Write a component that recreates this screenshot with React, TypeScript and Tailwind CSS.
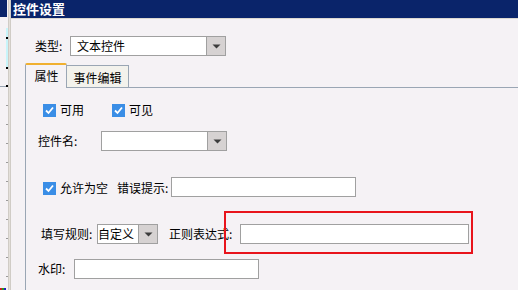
import React from "react";

const font = { fontFamily: '"Noto Sans CJK SC", "Noto Sans", sans-serif' };

function Check() {
  return (
    <span className="flex h-[13px] w-[13px] shrink-0 items-center justify-center bg-[#3a8ee6]">
      <svg width="11" height="11" viewBox="0 0 11 11">
        <path d="M2 5.5 L4.5 8 L9 2.5" stroke="white" strokeWidth="1.8" fill="none" />
      </svg>
    </span>
  );
}

function Arrow() {
  return (
    <svg width="9" height="5" viewBox="0 0 9 5">
      <path d="M0.5 0.5 H8.5 L4.5 4.5 Z" fill="#3c3c3c" />
    </svg>
  );
}

function Select({ w, text, tight }: { w: string; text?: string; tight?: boolean }) {
  return (
    <div className={`flex h-[20px] ${w} border border-[#a0a0a0] bg-white`}>
      <div
        className={`min-w-0 flex-1 overflow-hidden whitespace-nowrap ${tight ? "pl-0" : "pl-[6px]"} text-[12px] leading-[18px] text-black`}
      >
        {text}
      </div>
      <div className="flex w-[19px] shrink-0 items-center justify-center border-l border-[#a0a0a0] bg-[#d6d2d2]">
        <Arrow />
      </div>
    </div>
  );
}

function Input({ w }: { w: string }) {
  return <div className={`h-[20px] ${w} border border-[#a0a0a0] bg-white`} />;
}

export default function App() {
  const ticks = [105, 124, 143, 162, 181, 200, 219, 238, 257, 276];
  return (
    <div className="relative flex h-[290px] w-[518px] overflow-hidden bg-[#f5f2f5] text-[12px] text-black" style={font}>
      {/* left ruler strip */}
      <div className="relative h-full w-[8px] shrink-0">
        <div className="absolute left-0 top-0 h-[17px] w-[7px] bg-[#0a246a]" />
        <div className="absolute left-[6px] top-[28px] h-[40px] w-[2px] bg-[#c8f4fa]" />
        <div className="absolute left-[6px] top-[37px] h-[2px] w-[2px] bg-black" />
        <div className="absolute left-[6px] top-[67px] h-[2px] w-[2px] bg-black" />
        <div className="absolute left-0 top-[86px] h-px w-[6px] bg-[#9aa6b4]" />
        <div className="absolute left-[6px] top-[85px] h-[2px] w-[2px] bg-black" />
        {ticks.map((t) => (
          <div key={t} className="absolute left-[6px] h-px w-[2px] bg-[#9a9a9a]" style={{ top: t }} />
        ))}
        <div className="absolute bottom-0 left-0 h-[2px] w-[2px] bg-[#d02020]" />
        <div className="absolute bottom-0 left-[2px] h-[2px] w-[2px] bg-[#20a020]" />
        <div className="absolute bottom-0 left-[4px] h-[2px] w-[2px] bg-[#2020c0]" />
      </div>
      <div className="h-full w-px shrink-0 bg-[#d0ccc6]" />
      <div className="h-full w-px shrink-0 bg-[#e4e0da]" />
      <div className="h-full w-px shrink-0 bg-[#d0ccc6]" />

      {/* main */}
      <div className="flex min-w-0 flex-1 flex-col">
        <div className="h-[18px] shrink-0 bg-[#0a246a] pl-[2px] text-[13px] font-bold leading-[18px] text-white">
          控件设置
        </div>
        <div className="h-px shrink-0 bg-[#dcd8d0]" />

        {/* type row */}
        <div className="ml-[24px] mt-[17px] flex h-[20px] items-center">
          <span className="w-[35px]">类型:</span>
          <Select w="w-[156px]" text="文本控件" />
        </div>

        {/* tabs */}
        <div className="ml-[14px] mt-[7px] flex h-[24px] items-end">
          <div className="relative z-10 -mb-px flex h-[25px] w-[42px] items-start justify-center rounded-t-[2px] border-x border-t-2 border-x-[#9aa6b4] border-t-[#f0b030] bg-[#f5f2f5] pt-[2px] pl-[1px]">
            属性
          </div>
          <div className="flex h-[22px] w-[62px] items-start justify-center border-r border-t border-[#9aa6b4] bg-[#f3f2ec] pt-[3px]">
            事件编辑
          </div>
        </div>

        {/* panel */}
        <div className="ml-[14px] flex flex-1 flex-col border-l border-t border-[#9aa6b4]">
          <div className="ml-[17px] mt-[12px] flex h-[20px] items-center">
            <Check />
            <span className="ml-[4px] w-[52px]">可用</span>
            <Check />
            <span className="ml-[4px]">可见</span>
          </div>

          <div className="ml-[12px] mt-[11px] flex h-[20px] items-center">
            <span className="w-[63px]">控件名:</span>
            <Select w="w-[126px]" />
          </div>

          <div className="ml-[17px] mt-[26px] flex h-[20px] items-center">
            <span className="mt-[3px]">
              <Check />
            </span>
            <span className="ml-[4px] mt-[2px] w-[57px]">允许为空</span>
            <span className="mt-[2px] w-[54px]">错误提示:</span>
            <Input w="w-[185px]" />
          </div>

          <div className="ml-[15px] mt-[27px] flex h-[20px] items-center">
            <span className="w-[56px]">填写规则:</span>
            <Select w="w-[61px]" text="自定义" tight />
            <span className="ml-[11px] w-[71px]">正则表达式:</span>
            <Input w="w-[229px]" />
          </div>

          <div className="ml-[12px] mt-[15px] flex h-[20px] items-center">
            <span className="w-[36px]">水印:</span>
            <Input w="w-[185px]" />
          </div>
        </div>
      </div>

      {/* red annotation box */}
      <div className="absolute left-[224px] top-[211px] h-[43px] w-[249px] border-2 border-[#e8141c]" />
    </div>
  );
}
